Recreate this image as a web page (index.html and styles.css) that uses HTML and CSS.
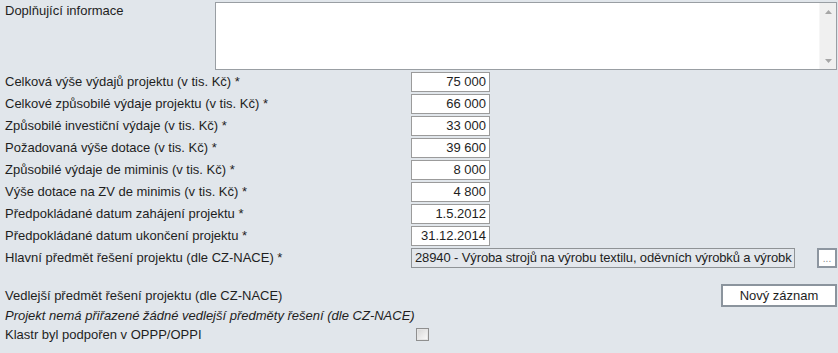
FILE: index.html
```html
<!DOCTYPE html>
<html lang="cs">
<head>
<meta charset="utf-8">
<title>Formulář projektu</title>
<link rel="stylesheet" href="styles.css">
</head>
<body>
<div class="form">
  <div class="row row-ta">
    <div class="label label-ta">Doplňující informace</div>
    <div class="textarea">
      <div class="ta-body"></div>
      <div class="ta-scroll">
        <svg class="arrow" width="7" height="4" viewBox="0 0 7 4"><path d="M0 4 L3.5 0 L7 4 Z" fill="#a6a6a6"/></svg>
        <svg class="arrow" width="7" height="4" viewBox="0 0 7 4"><path d="M0 0 L7 0 L3.5 4 Z" fill="#a6a6a6"/></svg>
      </div>
    </div>
  </div>
  <div class="row"><div class="label">Celková výše výdajů projektu (v tis. Kč) *</div><div class="field num">75 000</div></div>
  <div class="row"><div class="label">Celkové způsobilé výdaje projektu (v tis. Kč) *</div><div class="field num">66 000</div></div>
  <div class="row"><div class="label">Způsobilé investiční výdaje (v tis. Kč) *</div><div class="field num">33 000</div></div>
  <div class="row"><div class="label">Požadovaná výše dotace (v tis. Kč) *</div><div class="field num">39 600</div></div>
  <div class="row"><div class="label">Způsobilé výdaje de miminis (v tis. Kč) *</div><div class="field num">8 000</div></div>
  <div class="row"><div class="label">Výše dotace na ZV de minimis (v tis. Kč) *</div><div class="field num">4 800</div></div>
  <div class="row"><div class="label">Předpokládané datum zahájení projektu *</div><div class="field num">1.5.2012</div></div>
  <div class="row"><div class="label">Předpokládané datum ukončení projektu *</div><div class="field num">31.12.2014</div></div>
  <div class="row"><div class="label">Hlavní předmět řešení projektu (dle CZ-NACE) *</div><div class="field wide">28940 - Výroba strojů na výrobu textilu, oděvních výrobků a výrobk</div><div class="dots">...</div></div>
  <div class="row row-sub"><div class="label">Vedlejší předmět řešení projektu (dle CZ-NACE)</div><div class="btn">Nový záznam</div></div>
  <div class="note">Projekt nemá přiřazené žádné vedlejší předměty řešení (dle CZ-NACE)</div>
  <div class="row row-check"><div class="label">Klastr byl podpořen v OPPP/OPPI</div><span class="checkbox"></span></div>
</div>
</body>
</html>
```

FILE: styles.css
```css
html, body {
  margin: 0;
  padding: 0;
  background: #e1e6eb;
}
body {
  font-family: "Liberation Sans", Arial, sans-serif;
  font-size: 13px;
  color: #1e1e1e;
  width: 838px;
  height: 353px;
  overflow: hidden;
}
.form {
  padding: 2px 1px 0 5px;
  display: flex;
  flex-direction: column;
}
.row {
  display: flex;
  align-items: center;
  height: 20px;
  margin-bottom: 2px;
}
.label {
  width: 406px;
  flex: none;
  white-space: nowrap;
  line-height: 16px;
}
.row-ta {
  height: 68px;
  align-items: flex-start;
}
.label-ta {
  width: 210px;
  padding-top: 1px;
}
.textarea {
  flex: 1;
  height: 68px;
  box-sizing: border-box;
  border: 1px solid #999ea3;
  background: #fff;
  display: flex;
}
.ta-body {
  flex: 1;
}
.ta-scroll {
  width: 16px;
  background: #f0f0f0;
  border-left: 1px solid #f6f6f6;
  display: flex;
  flex-direction: column;
  justify-content: space-between;
  align-items: center;
  padding: 7px 0 6px;
}
.arrow {
  display: block;
}
.field {
  box-sizing: border-box;
  height: 20px;
  border: 1px solid #9b9b9b;
  background: #fff;
  line-height: 18px;
  white-space: nowrap;
  overflow: hidden;
}
.num {
  width: 79px;
  text-align: right;
  padding-right: 3px;
}
.wide {
  width: 384px;
  padding-left: 3px;
  background: #e3e7ec;
  border-color: #8f9396;
  letter-spacing: -0.12px;
}
.dots {
  box-sizing: border-box;
  width: 20px;
  height: 20px;
  margin-left: 22px;
  margin-top: -1px;
  border: 2px solid #8d96a0;
  background: #fff;
  color: #8a8a8a;
  font-size: 10px;
  line-height: 14px;
  padding-top: 2px;
  text-align: center;
  overflow: hidden;
}
.row-sub {
  height: 23px;
  margin-top: 14px;
  margin-bottom: 0;
}
.btn {
  margin-left: auto;
  box-sizing: border-box;
  width: 116px;
  height: 23px;
  border: 2px solid #8b949d;
  background: #fff;
  text-align: center;
  line-height: 19px;
  white-space: nowrap;
}
.note {
  font-style: italic;
  line-height: 18px;
  height: 18px;
  white-space: nowrap;
}
.row-check {
  height: 19px;
  margin-bottom: 0;
}
.checkbox {
  box-sizing: border-box;
  width: 13px;
  height: 13px;
  margin-left: 5px;
  border: 1px solid #8f8f8f;
  background: linear-gradient(135deg, #d6d6d6 0%, #f4f4f4 80%, #ffffff 100%);
  box-shadow: inset 0 0 0 1px #e6e6e6;
}
```
